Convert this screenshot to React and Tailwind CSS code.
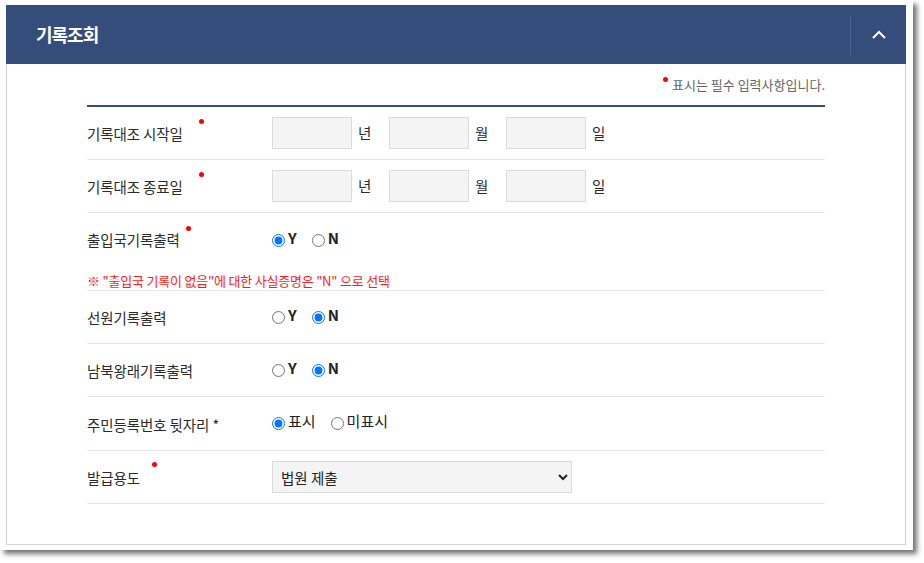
import { useState } from "react"

const font = { fontFamily: '"Noto Sans CJK KR", "Noto Sans", sans-serif' }

const Dot = ({ className = "" }) => (
  <span className={`inline-block h-[5px] w-[5px] rounded-full bg-[#ff0000] ${className}`} />
)

const Label = ({ children, required, dotClass = "ml-[14px]" }) => (
  <div className="w-[185px] shrink-0 flex items-start text-[14.5px] tracking-[-0.1px] text-[#2b2b2b] leading-[20px] pt-[2px]">
    <span>{children}</span>
    {required && <Dot className={dotClass} />}
  </div>
)

const DateBox = ({ unit }) => (
  <>
    <input
      type="text"
      className="w-[80px] h-[32px] bg-[#f4f4f4] border border-[#dcdcdc] outline-none px-2 text-[14px]"
    />
    <span className="w-[37px] pl-[6px] text-[14.5px] text-[#2b2b2b]">{unit}</span>
  </>
)

const Radio = ({ name, value, label, checked, onChange, bold = true }) => (
  <label className="flex items-center mr-[15px] cursor-pointer">
    <input
      type="radio"
      name={name}
      value={value}
      checked={checked}
      onChange={() => onChange(value)}
      className="m-0 h-[13px] w-[13px] mt-[2px]"
    />
    <span className={`ml-[3px] text-[15px] text-[#222] leading-[16px] -mt-[3px] ${bold ? "font-bold" : ""}`}>
      {label}
    </span>
  </label>
)

const App = () => {
  const [entry, setEntry] = useState("Y")
  const [seaman, setSeaman] = useState("N")
  const [northSouth, setNorthSouth] = useState("N")
  const [rrn, setRrn] = useState("show")
  const [purpose, setPurpose] = useState("court")

  return (
    <div className="w-[924px] h-[563px] bg-white" style={font}>
      <div className="w-[913px] h-[550px] bg-white shadow-[4px_4px_5px_rgba(0,0,0,0.55)] pt-[5px] pl-[6px]">
        <div className="w-[900px] h-[540px] border border-[#d4d4d4] border-t-0 bg-white">
          {/* 헤더 */}
          <div className="-mx-px h-[59px] bg-[#344d7a] flex items-center">
            <h2 className="flex-1 pl-[30px] text-[18px] font-bold text-white tracking-[-1px]">기록조회</h2>
            <div className="h-[40px] w-px bg-[#4b628c]" />
            <button className="w-[55px] h-full flex items-center justify-center">
              <svg width="14" height="9" viewBox="0 0 14 9" fill="none">
                <path d="M1 8l6-6 6 6" stroke="white" strokeWidth="2" />
              </svg>
            </button>
          </div>

          <div className="px-[80px]">
            {/* 필수 안내 */}
            <p className="pt-[12px] pb-[11px] flex justify-end items-start text-[13px] leading-[18px] text-[#666]">
              <Dot className="mr-[4px] mt-[1px]" />
              표시는 필수 입력사항입니다.
            </p>
            <div className="h-[2px] bg-[#344d7a]" />

            {/* 기록대조 시작일 */}
            <div className="flex items-center h-[53px] border-b border-[#e6e6e6]">
              <Label required dotClass="ml-[16px] -mt-[5px]">기록대조 시작일</Label>
              <div className="flex items-center">
                <DateBox unit="년" />
                <DateBox unit="월" />
                <DateBox unit="일" />
              </div>
            </div>

            {/* 기록대조 종료일 */}
            <div className="flex items-center h-[53px] border-b border-[#e6e6e6]">
              <Label required dotClass="ml-[16px] -mt-[5px]">기록대조 종료일</Label>
              <div className="flex items-center">
                <DateBox unit="년" />
                <DateBox unit="월" />
                <DateBox unit="일" />
              </div>
            </div>

            {/* 출입국기록출력 */}
            <div className="border-b border-[#e6e6e6]">
              <div className="flex items-center h-[52px]">
                <Label required dotClass="ml-[6px] -mt-[4px]">출입국기록출력</Label>
                <div className="flex items-center">
                  <Radio name="entry" value="Y" label="Y" checked={entry === "Y"} onChange={setEntry} />
                  <Radio name="entry" value="N" label="N" checked={entry === "N"} onChange={setEntry} />
                </div>
              </div>
              <p className="pt-[7px] h-[25px] text-[13px] leading-[18px] text-[#ff1a1a] tracking-[-0.2px]">
                ※ "출입국 기록이 없음"에 대한 사실증명은 "N" 으로 선택
              </p>
            </div>

            {/* 선원기록출력 */}
            <div className="flex items-center h-[53px] border-b border-[#e6e6e6]">
              <Label>선원기록출력</Label>
              <div className="flex items-center -mt-[2px]">
                <Radio name="seaman" value="Y" label="Y" checked={seaman === "Y"} onChange={setSeaman} />
                <Radio name="seaman" value="N" label="N" checked={seaman === "N"} onChange={setSeaman} />
              </div>
            </div>

            {/* 남북왕래기록출력 */}
            <div className="flex items-center h-[53px] border-b border-[#e6e6e6]">
              <Label>남북왕래기록출력</Label>
              <div className="flex items-center -mt-[2px]">
                <Radio name="ns" value="Y" label="Y" checked={northSouth === "Y"} onChange={setNorthSouth} />
                <Radio name="ns" value="N" label="N" checked={northSouth === "N"} onChange={setNorthSouth} />
              </div>
            </div>

            {/* 주민등록번호 뒷자리 */}
            <div className="flex items-center h-[54px] border-b border-[#e6e6e6]">
              <Label>주민등록번호 뒷자리 *</Label>
              <div className="flex items-center -mt-[2px]">
                <Radio name="rrn" value="show" label="표시" checked={rrn === "show"} onChange={setRrn} bold={false} />
                <Radio name="rrn" value="hide" label="미표시" checked={rrn === "hide"} onChange={setRrn} bold={false} />
              </div>
            </div>

            {/* 발급용도 */}
            <div className="flex items-center h-[53px] border-b border-[#e6e6e6]">
              <Label required dotClass="ml-[12px] -mt-[6px]">발급용도</Label>
              <select
                value={purpose}
                onChange={(e) => setPurpose(e.target.value)}
                className="w-[300px] h-[32px] bg-[#f4f4f4] border border-[#dcdcdc] pl-[4px] text-[14.5px] text-[#222] outline-none"
              >
                <option value="court">법원 제출</option>
                <option value="office">관공서 제출</option>
                <option value="personal">개인 확인용</option>
              </select>
            </div>
          </div>
        </div>
      </div>
    </div>
  )
}

export default App
